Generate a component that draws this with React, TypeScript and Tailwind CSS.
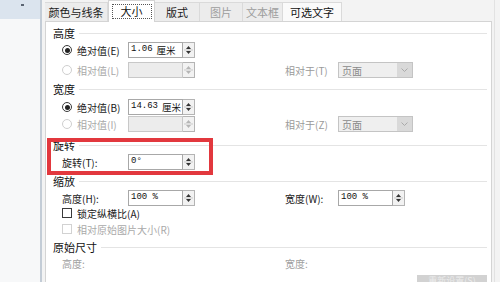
import React from "react";

const font = { fontFamily: '"Noto Sans CJK SC", "Noto Sans", sans-serif' };

function Spinner({ disabled = false }: { disabled?: boolean }) {
  const c = disabled ? "#b5b5b5" : "#333";
  return (
    <div className="flex h-[16px] w-[12px] flex-col border border-l-0 border-[#b4b4b4] bg-[#f2f2f2]">
      <svg width="11" height="14" viewBox="0 0 11 14">
        <path d="M5.5 3 L8 6 L3 6 Z" fill={c} />
        <line x1="1" y1="7" x2="10" y2="7" stroke="#c9c9c9" strokeWidth="1" />
        <path d="M5.5 11 L8 8 L3 8 Z" fill={c} />
      </svg>
    </div>
  );
}

function NumInput({ num, unit, disabled = false }: { num?: string; unit?: string; disabled?: boolean }) {
  return (
    <div className="flex items-center">
      <div
        className={
          "flex h-[16px] w-[55px] items-center gap-[4px] overflow-hidden whitespace-nowrap border pl-[2px] text-[#111] " +
          (disabled ? "border-[#c8c8c8] bg-[#ececec]" : "border-[#a8a8a8] bg-white")
        }
      >
        {num && (
          <span className="text-[9px]" style={{ fontFamily: '"Liberation Mono", monospace' }}>
            {num}
          </span>
        )}
        {unit && <span className="text-[9.5px]">{unit}</span>}
      </div>
      <Spinner disabled={disabled} />
    </div>
  );
}

function Radio({ checked = false, disabled = false, label }: { checked?: boolean; disabled?: boolean; label: string }) {
  return (
    <div className="flex w-[66px] items-center gap-[5px]">
      <span
        className={
          "flex h-[10px] w-[10px] items-center justify-center rounded-full border bg-white " +
          (disabled ? "border-[#cfcfcf]" : "border-[#3a3a3a]")
        }
      >
        {checked && <span className="h-[5px] w-[5px] rounded-full bg-[#222]" />}
      </span>
      <span className={"whitespace-nowrap text-[10px] " + (disabled ? "text-[#a9a9a9]" : "text-[#1a1a1a]")}>{label}</span>
    </div>
  );
}

function Check({ disabled = false, label }: { disabled?: boolean; label: string }) {
  return (
    <div className="flex h-[14px] items-center gap-[5px] pl-[16px]">
      <span className={"h-[10px] w-[10px] border bg-white " + (disabled ? "border-[#d2d2d2]" : "border-[#3a3a3a]")} />
      <span className={"whitespace-nowrap text-[10px] " + (disabled ? "text-[#a9a9a9]" : "text-[#1a1a1a]")}>{label}</span>
    </div>
  );
}

function Heading({ text, h = "h-[18px]", mt = "" }: { text: string; h?: string; mt?: string }) {
  return (
    <div className={"flex items-center gap-[4px] pl-[7px] pr-[4px] " + h + " " + mt}>
      <span className="whitespace-nowrap text-[11px] text-[#111]">{text}</span>
      <div className="h-px flex-1 bg-[#e4e4e4]" />
    </div>
  );
}

function Relative({ label }: { label: string }) {
  return (
    <div className="ml-[90px] flex items-center">
      <span className="w-[53px] whitespace-nowrap text-[10px] text-[#9a9a9a]">{label}</span>
      <div className="flex h-[16px] w-[75px] items-center border border-[#c4c4c4] bg-[#efefef]">
        <span className="flex-1 pl-[3px] text-[10px] text-[#8a8a8a]">页面</span>
        <div className="flex h-full w-[15px] items-center justify-center bg-[#d9d9d9]">
          <svg width="7" height="5" viewBox="0 0 7 5">
            <path d="M0.5 0.5 L3.5 3.5 L6.5 0.5" fill="none" stroke="#aaa" strokeWidth="1" />
          </svg>
        </div>
      </div>
    </div>
  );
}

const tabs = [
  { label: "颜色与线条", w: "w-[63px]", state: "normal" },
  { label: "大小", w: "w-[47px]", state: "active" },
  { label: "版式", w: "w-[45px]", state: "normal" },
  { label: "图片", w: "w-[43px]", state: "disabled" },
  { label: "文本框", w: "w-[40px]", state: "disabled" },
  { label: "可选文字", w: "w-[59px]", state: "hover" },
];

export default function App() {
  return (
    <div className="relative flex h-[282px] w-[500px] overflow-hidden bg-[#f3f3f3]" style={font}>
      {/* left window strip */}
      <div className="flex w-[42px] flex-col border-r-2 border-[#c3ccd6]">
        <div className="h-[19px] bg-[#dbe4ee] pl-[21px] pt-[4px]">
          <div className="h-[2px] w-[3px] bg-[#5a6472]" />
        </div>
        <div className="flex-1 bg-[#f7f8f9]" />
      </div>

      {/* dialog */}
      <div className="flex w-[450px] flex-col pl-[3px]">
        <div className="flex h-[21px] items-end">
          {tabs.map((t) =>
            t.state === "active" ? (
              <div key={t.label} className={"relative z-10 -mb-px flex h-[22px] items-center justify-center border border-b-0 border-[#d4d4d4] bg-white " + t.w}>
                <span className="border border-dotted border-[#555] px-[8px] text-[11px] leading-[13px] text-[#111]">{t.label}</span>
              </div>
            ) : (
              <div
                key={t.label}
                className={
                  "flex h-[19px] items-center justify-center border border-b-0 border-l-0 border-[#dadada] text-[11px] " +
                  t.w +
                  " " +
                  (t.state === "disabled" ? "bg-[#ececec] text-[#9d9d9d]" : t.state === "hover" ? "bg-[#fafafa] text-[#111]" : "bg-[#ececec] text-[#1a1a1a]")
                }
              >
                {t.label}
              </div>
            )
          )}
        </div>

        <div className="flex flex-1 flex-col border border-b-0 border-[#d4d4d4] bg-white">
          <Heading text="高度" mt="mt-[2px]" />
          <div className="flex h-[16px] items-center pl-[16px]">
            <Radio checked label="绝对值(E)" />
            <NumInput num="1.06" unit="厘米" />
          </div>
          <div className="mt-[4px] flex h-[16px] items-center pl-[16px]">
            <Radio disabled label="相对值(L)" />
            <NumInput disabled />
            <Relative label="相对于(T)" />
          </div>

          <Heading text="宽度" mt="mt-[2px]" />
          <div className="mt-[1px] flex h-[16px] items-center pl-[16px]">
            <Radio checked label="绝对值(B)" />
            <NumInput num="14.63" unit="厘米" />
          </div>
          <div className="mt-[1px] flex h-[16px] items-center pl-[16px]">
            <Radio disabled label="相对值(I)" />
            <NumInput disabled />
            <Relative label="相对于(Z)" />
          </div>

          <Heading text="旋转" mt="mt-[4px]" />
          <div className="flex h-[16px] items-center pl-[16px]">
            <span className="w-[66px] whitespace-nowrap text-[10px] text-[#1a1a1a]">旋转(T):</span>
            <NumInput num="0°" />
          </div>

          <Heading text="缩放" h="h-[17px]" mt="mt-[3px]" />
          <div className="flex h-[16px] items-center pl-[16px]">
            <span className="w-[66px] whitespace-nowrap text-[10px] text-[#1a1a1a]">高度(H):</span>
            <NumInput num="100 %" />
            <span className="ml-[90px] w-[53px] whitespace-nowrap text-[10px] text-[#1a1a1a]">宽度(W):</span>
            <NumInput num="100 %" />
          </div>
          <Check label="锁定纵横比(A)" />
          <div className="mt-[2px]">
            <Check disabled label="相对原始图片大小(R)" />
          </div>

          <Heading text="原始尺寸" mt="mt-[2px]" />
          <div className="flex h-[14px] items-center pl-[16px]">
            <span className="w-[223px] text-[10px] text-[#a0a0a0]">高度:</span>
            <span className="text-[10px] text-[#a0a0a0]">宽度:</span>
          </div>
          <div className="mt-[5px] flex justify-end pr-[4px]">
            <div className="flex h-[16px] w-[70px] items-start justify-center bg-[#d2d2d2] text-[9px] leading-[12px] text-[#ececec]">重新设置(S)</div>
          </div>
        </div>
      </div>

      {/* right edge */}
      <div className="flex w-[8px] pl-[2px]">
        <div className="w-px bg-[#e2e2e2]" />
      </div>

      {/* red annotation */}
      <div className="absolute left-[47px] top-[138px] h-[37px] w-[166px] border-4 border-[#e2383e]" />
    </div>
  );
}
